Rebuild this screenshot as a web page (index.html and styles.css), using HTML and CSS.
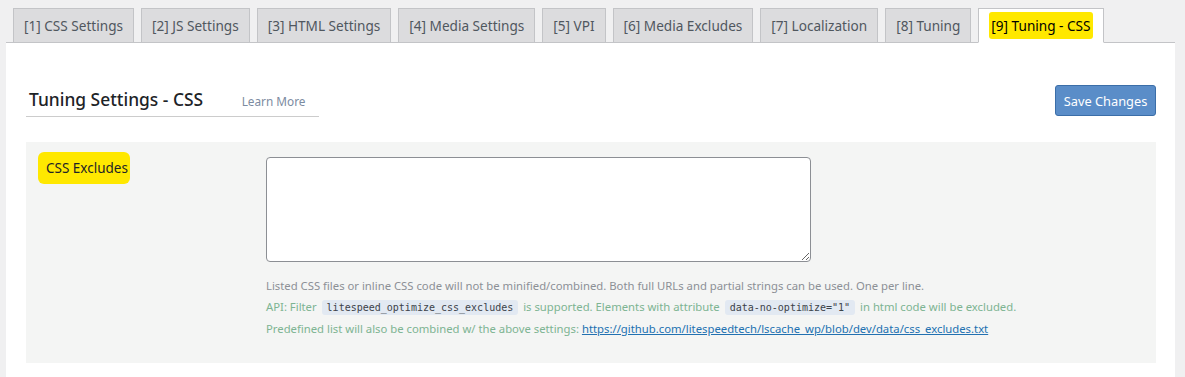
FILE: index.html
```html
<!DOCTYPE html>
<html lang="en">
<head>
    <meta charset="UTF-8">
    <meta name="viewport" content="width=device-width, initial-scale=1.0">
    <title>Tuning Settings - CSS</title>
    <link rel="stylesheet" href="styles.css">
</head>
<body>
    <div class="wrap">
        <nav class="nav-tabs">
            <a class="nav-tab" href="#">[1] CSS Settings</a>
            <a class="nav-tab" href="#">[2] JS Settings</a>
            <a class="nav-tab" href="#">[3] HTML Settings</a>
            <a class="nav-tab" href="#">[4] Media Settings</a>
            <a class="nav-tab" href="#">[5] VPI</a>
            <a class="nav-tab" href="#">[6] Media Excludes</a>
            <a class="nav-tab" href="#">[7] Localization</a>
            <a class="nav-tab" href="#">[8] Tuning</a>
            <a class="nav-tab active" href="#"><span class="marker">[9] Tuning - CSS</span></a>
        </nav>

        <div class="panel">
            <div class="panel-head">
                <h3 class="title">
                    Tuning Settings - CSS
                    <a class="learn-more" href="#">Learn More</a>
                </h3>
                <button class="save-btn" type="button">Save Changes</button>
            </div>

            <div class="setting-box">
                <div class="setting-label"><span class="marker label-marker">CSS Excludes</span></div>
                <div class="setting-field">
                    <textarea class="excludes"></textarea>
                    <div class="desc">
                        <p class="muted">Listed CSS files or inline CSS code will not be minified/combined. Both full URLs and partial strings can be used. One per line.</p>
                        <p class="success">API: Filter <code>litespeed_optimize_css_excludes</code> is supported. Elements with attribute <code>data-no-optimize="1"</code> in html code will be excluded.</p>
                        <p class="success">Predefined list will also be combined w/ the above settings: <a href="#">https://github.com/litespeedtech/lscache_wp/blob/dev/data/css_excludes.txt</a></p>
                    </div>
                </div>
            </div>
        </div>
    </div>
</body>
</html>
```

FILE: styles.css
```css
body {
    margin: 0;
    padding: 0;
    background: #f0f0f1;
    font-family: 'Noto Sans', 'Open Sans', sans-serif;
    color: #1d2327;
}

.wrap {
    padding: 8px 10px 0 6px;
}

.nav-tabs {
    display: flex;
    border-bottom: 1px solid #c3c4c7;
}

.nav-tab {
    margin-left: 7px;
    margin-bottom: -1px;
    padding: 5px 10px;
    border: 1px solid #c3c4c7;
    background: #dcdcde;
    color: #50575e;
    font-size: 13.6px;
    line-height: 23px;
    text-decoration: none;
    white-space: nowrap;
}

.nav-tab.active {
    background: #fff;
    border-bottom-color: #fff;
    color: #000;
}

.marker {
    background: #ffe800;
    border-radius: 3px;
    padding: 3px 1px;
}

.nav-tab .marker {
    padding: 4px 2px;
}

.panel {
    background: #fff;
    padding: 42px 19px 14px 20px;
}

.panel-head {
    display: flex;
    justify-content: space-between;
    align-items: flex-start;
}

.title {
    margin: 0;
    width: 290px;
    padding: 2px 0 3px 3px;
    border-bottom: 1px solid #ccc;
    font-size: 17.4px;
    font-weight: 500;
    color: #1d2327;
    line-height: 24px;
}

.learn-more {
    margin-left: 34px;
    font-size: 11.8px;
    font-weight: normal;
    color: #7c8ba1;
    text-decoration: none;
}

.save-btn {
    width: 101px;
    height: 31px;
    background: #5a8dc8;
    border: 1px solid #3b6ea8;
    border-radius: 3px;
    color: #fff;
    font-family: inherit;
    font-size: 12.8px;
    padding: 0;
    cursor: pointer;
}

.setting-box {
    display: flex;
    margin-top: 25px;
    background: #f4f5f4;
    padding: 15px 20px 24px 12px;
}

.setting-label {
    width: 228px;
    flex-shrink: 0;
    padding-top: 2px;
    font-size: 13.5px;
}

.label-marker {
    padding: 7px 2px 7px 8px;
    border-radius: 6px;
}

.excludes {
    display: block;
    width: 545px;
    height: 105px;
    box-sizing: border-box;
    border: 1px solid #8c8f94;
    border-radius: 4px;
    background: #fff;
    margin: 0;
}

.desc {
    margin-top: 13px;
    font-size: 11.3px;
    line-height: 21px;
}

.desc p {
    margin: 0;
}

.muted {
    color: #8c9096;
}

.success {
    color: #7db492;
}

.desc code {
    background: #e2e9f2;
    color: #3c434a;
    font-family: 'DejaVu Sans Mono', monospace;
    font-size: 10px;
    padding: 2px 5px;
    margin: 0 2px;
    border-radius: 3px;
}

.desc a {
    color: #2271b1;
}
```
